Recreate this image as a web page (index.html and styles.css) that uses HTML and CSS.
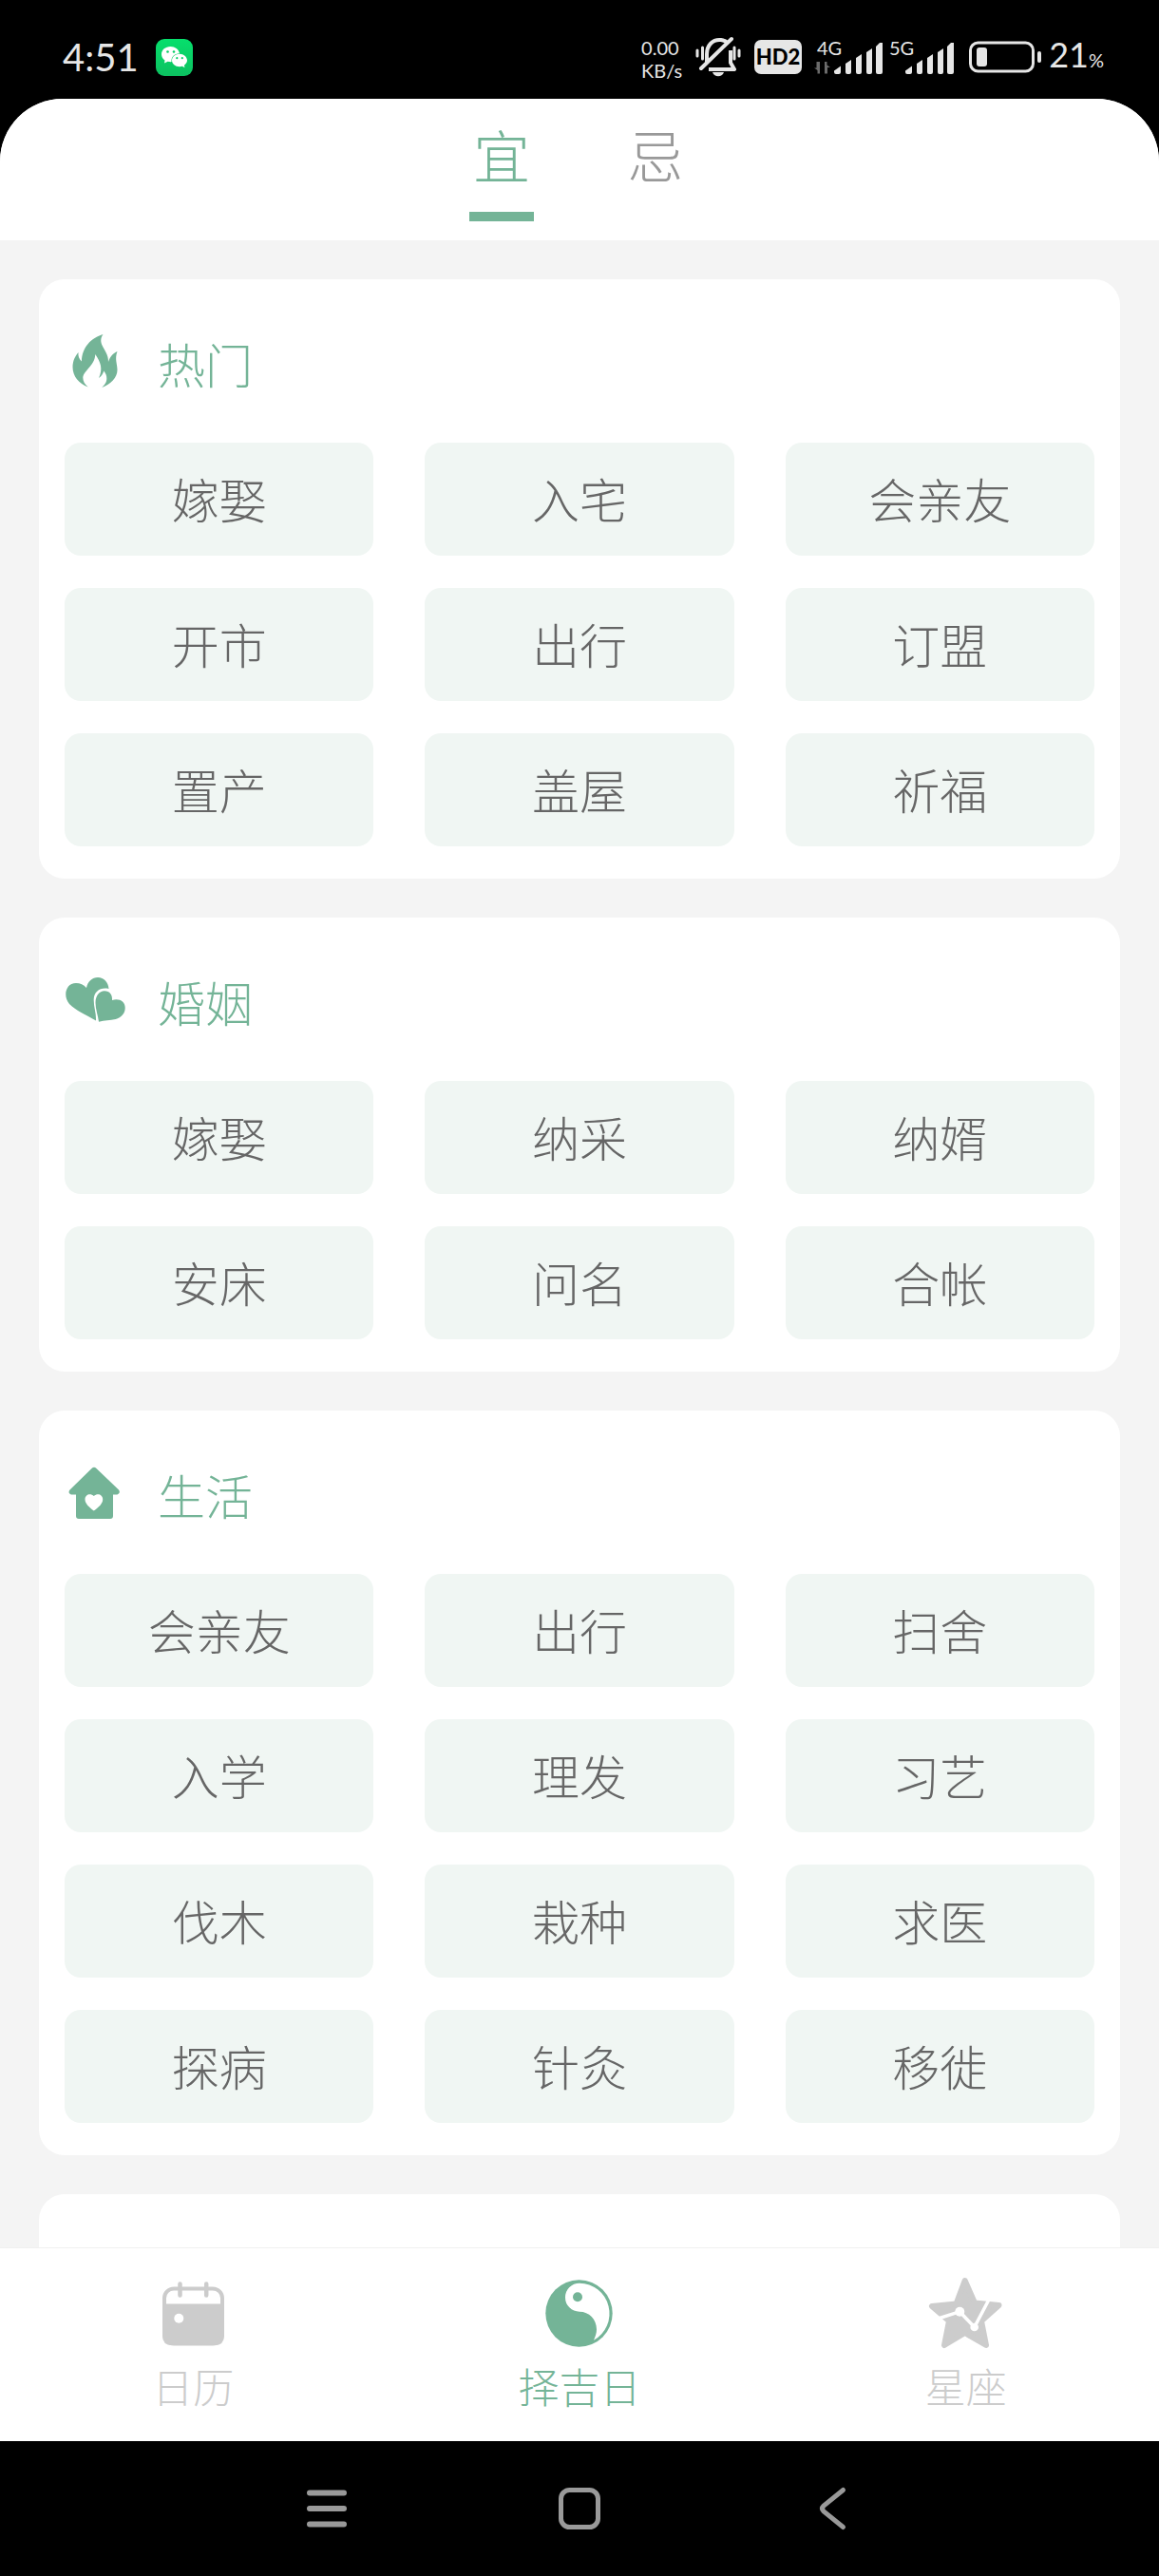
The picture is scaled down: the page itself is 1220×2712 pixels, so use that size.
FILE: index.html
```html
<!DOCTYPE html>
<html lang="zh-CN">
<head>
<meta charset="utf-8">
<meta name="viewport" content="width=device-width, initial-scale=1">
<title>择吉日</title>
<link rel="stylesheet" href="styles.css">
</head>
<body>
<div class="screen">
  <div class="status">
    <span class="clock">4:51</span>
    <svg class="wechat" width="39" height="39" viewBox="0 0 39 39" aria-hidden="true">
      <defs><linearGradient id="wx" x1="0" y1="0" x2="0" y2="1"><stop offset="0" stop-color="#06df6c"/><stop offset="1" stop-color="#0cc160"/></linearGradient></defs>
      <rect width="39" height="39" rx="9" fill="url(#wx)"/>
      <path d="M15.500 8C10 8 6 11.600 6 16.200c0 2.600 1.300 4.800 3.500 6.300L9 25.500l3.600-1.800c1.300.3 2.600.5 4 .4-.8-5 3.200-8.600 8.400-8.800C24.200 11 20.200 8 15.500 8z" fill="#fff"/>
      <path d="M25 15.800c-4.500 0-8 3-8 6.800s3.500 6.700 8 6.700c1 0 2-.2 2.900-.5l2.600 1.500-.6-2.600c2-1.300 3.100-3.100 3.100-5.100 0-3.800-3.600-6.800-8-6.800z" fill="#fff"/>
      <g fill="#08d066"><circle cx="12.500" cy="13.500" r="1.300"/><circle cx="19" cy="13.500" r="1.300"/><circle cx="22.300" cy="20.200" r="1.100"/><circle cx="27.800" cy="20.200" r="1.100"/></g>
    </svg>
    <div class="status-right">
      <span class="speed"><span>0.00</span><span>KB/s</span></span>
      <svg class="bell" width="48" height="44" viewBox="0 0 48 44" fill="none" stroke="#e6e6e6" aria-hidden="true">
        <path d="M12 29V19c0-9 6-16 15-15 3 .3 5 1.500 7 3.500" stroke-width="4"/>
        <path d="M37 15v13l4 7H14" stroke-width="4" stroke-linejoin="round"/>
        <path d="M6 34L38 3" stroke-width="4" stroke-linecap="round"/>
        <path d="M18 38h12c-1 3-3.500 4.300-6 4.300S19 41 18 38z" fill="#e6e6e6" stroke="none"/>
        <path d="M2 15v6M7.500 12v12M41 12v12M46 15v6" stroke-width="3" stroke-linecap="round"/>
      </svg>
      <svg class="hd" width="50" height="36" viewBox="0 0 50 36" aria-hidden="true">
        <rect width="50" height="36" rx="7" fill="#e6e6e6"/>
        <text x="25" y="26" text-anchor="middle" class="hd-text">HD2</text>
      </svg>
      <svg class="sim-one" width="72" height="50" viewBox="0 -6 72 50" fill="#e6e6e6" aria-hidden="true">
        <text x="3" y="17" class="net">4G</text>
        <path d="M6 24v12.500H3.500V33L0 30.500h2.500V24zM11 24h2.500v3.500L17 30h-3v6.500h-3z" fill="#6b6b6b"/>
        <path d="M21 33.500l7-5V35q0 2-2 2h-3q-2 0-2-2zM33 26l6-4v13q0 2-2 2h-2q-2 0-2-2zM44 20l6-4v19q0 2-2 2h-2q-2 0-2-2zM55 14l6-4v25q0 2-2 2h-2q-2 0-2-2zM65 8l4-4h3v31q0 2-2 2h-3q-2 0-2-2z"/>
      </svg>
      <svg class="sim-two" width="68" height="50" viewBox="0 -6 68 50" fill="#e6e6e6" aria-hidden="true">
        <text x="0" y="17" class="net">5G</text>
        <path transform="translate(-4 0)" d="M21 33.500l7-5V35q0 2-2 2h-3q-2 0-2-2zM33 26l6-4v13q0 2-2 2h-2q-2 0-2-2zM44 20l6-4v19q0 2-2 2h-2q-2 0-2-2zM55 14l6-4v25q0 2-2 2h-2q-2 0-2-2zM65 8l4-4h3v31q0 2-2 2h-3q-2 0-2-2z"/>
      </svg>
      <svg class="battery" width="76" height="34" viewBox="0 0 76 34" aria-hidden="true">
        <rect x="1.500" y="2" width="66" height="30" rx="8" fill="none" stroke="#e6e6e6" stroke-width="3"/>
        <rect x="8" y="7" width="11" height="20" rx="3" fill="#e6e6e6"/>
        <rect x="72" y="11" width="4" height="12" rx="2" fill="#e6e6e6"/>
      </svg>
      <span class="percent">21<small>%</small></span>
    </div>
  </div>

  <div class="app">
    <header class="tabs">
      <button class="tab tab-on" type="button">宜</button>
      <button class="tab" type="button">忌</button>
    </header>

    <main class="list">
      <section class="card">
        <h2 class="card-title">
          <svg width="64" height="64" viewBox="0 0 64 64" fill="#74b497" aria-hidden="true"><path d="M40.500 4C37.500 8 38 12 39.500 15.500 42.500 22 46 25 46 33c2-6 5-9 9.500-11-3 8 0 13 0 19.500 0 8-7 15-16.200 18.500 4-4 5-6.500 5-9.500 0-3-1-5.500-3-8-1 3-2.500 5.500-5.300 7.500 2-4 2.800-9 2-13-.8-4-3-8-5.700-12-.3 7-4 11-7 14.500-4 5-6 7-6 10 0 4 2 7 5.500 10C15 56 8.500 48 8.500 38.500 8.500 32 11 27 14.500 23c-.5 4 .8 7 3.500 9.500C18 18 28 7.500 40.500 4z"/></svg>
          <span>热门</span>
        </h2>
        <div class="grid">
          <button type="button">嫁娶</button><button type="button">入宅</button><button type="button">会亲友</button>
          <button type="button">开市</button><button type="button">出行</button><button type="button">订盟</button>
          <button type="button">置产</button><button type="button">盖屋</button><button type="button">祈福</button>
        </div>
      </section>

      <section class="card">
        <h2 class="card-title">
          <svg width="64" height="64" viewBox="0 0 64 64" fill="#74b497" aria-hidden="true"><path d="M33 54.500C22 48 12 44 5 37-2 29 1 15 12 15c4.500 0 8 1.500 11 5 1.500-7 6-11 12-11 6.500 0 11 5 11.500 12-9-2-15.500 3-15.800 11-.2 8 2.800 15 2.300 22.500z"/><path d="M36 55.800c-.8-7-3.500-13-3.500-20 0-7.500 4-12.500 9.500-12.500s8.500 4 8 9.700c7-2.500 13.700 1 13.700 8 0 6-4 10-10 12-6 1.500-11.500 1-17.700 2.800z"/></svg>
          <span>婚姻</span>
        </h2>
        <div class="grid">
          <button type="button">嫁娶</button><button type="button">纳采</button><button type="button">纳婿</button>
          <button type="button">安床</button><button type="button">问名</button><button type="button">合帐</button>
        </div>
      </section>

      <section class="card">
        <h2 class="card-title">
          <svg width="64" height="64" viewBox="0 0 64 64" aria-hidden="true"><path d="M28.500 7q2.500-2.500 5 0L57 29.500c2 2.500 0 5-2.500 5H51V57q0 3-3 3H15q-3 0-3-3V34.500H8c-3 0-4.500-2.500-2.500-5z" fill="#74b497"/><path d="M30.800 51.500C26 48 21.500 44 21.500 39.500c0-5 5.500-7 9.300-3.500 3.800-3.500 9.400-1.500 9.400 3.500 0 4.500-4.500 8.500-9.400 12z" fill="#fff"/></svg>
          <span>生活</span>
        </h2>
        <div class="grid">
          <button type="button">会亲友</button><button type="button">出行</button><button type="button">扫舍</button>
          <button type="button">入学</button><button type="button">理发</button><button type="button">习艺</button>
          <button type="button">伐木</button><button type="button">栽种</button><button type="button">求医</button>
          <button type="button">探病</button><button type="button">针灸</button><button type="button">移徙</button>
        </div>
      </section>

      <section class="card card-next"></section>
    </main>

    <nav class="bottom">
      <a class="item" href="#calendar">
        <svg width="80" height="80" viewBox="0 0 80 80" fill="#ccc" aria-hidden="true"><rect x="10" y="13.500" width="61" height="58" rx="10" fill="none" stroke="#ccc" stroke-width="4"/><path d="M8 29.500h65V63q0 10-10 10H18Q8 73 8 63z"/><path d="M26.500 8.500v12M54.200 8.500v12" stroke="#ccc" stroke-width="4.500" stroke-linecap="round"/><circle cx="25.300" cy="44.700" r="5" fill="#fff"/></svg>
        日历
      </a>
      <a class="item item-on" href="#days">
        <svg width="80" height="80" viewBox="0 0 80 80" aria-hidden="true"><circle cx="39.500" cy="39.500" r="35.200" fill="#74b497"/><path d="M40 7.700a15 15 0 0 0 0 30c10 0 18 8 18 18.500 0 4-1.200 7.500-3 11.500A32 32 0 0 0 40 7.700z" fill="#fff"/><circle cx="38" cy="22.300" r="5" fill="#74b497"/></svg>
        择吉日
      </a>
      <a class="item" href="#zodiac">
        <svg width="80" height="80" viewBox="0 0 80 80" aria-hidden="true"><path d="M38.700 5L49 28.500 74.500 31 56 47.500 61 73 38.700 60 17 73l5-25.500L4 32l25.500-2.500z" fill="#ccc" stroke="#ccc" stroke-width="6" stroke-linejoin="round"/><path d="M9 45.500l24.300-7.800L48.700 54 64.500 24" fill="none" stroke="#fff" stroke-width="3.500"/><circle cx="33.300" cy="37.700" r="5" fill="#fff"/><circle cx="48.700" cy="54" r="4.300" fill="#fff"/></svg>
        星座
      </a>
    </nav>
  </div>

  <div class="system">
    <button type="button" aria-label="菜单"><svg width="48" height="48" viewBox="0 0 48 48" stroke="#999" stroke-width="6" stroke-linecap="round"><path d="M6 7.500h36M6 24h36M6 40.500h36"/></svg></button>
    <button type="button" aria-label="主页"><svg width="48" height="48" viewBox="0 0 48 48" fill="none" stroke="#999" stroke-width="5"><rect x="4.500" y="4.500" width="39" height="39" rx="9"/></svg></button>
    <button type="button" aria-label="返回"><svg width="48" height="48" viewBox="0 0 48 48" fill="none" stroke="#999" stroke-width="5" stroke-linecap="round"><path d="M35.500 4.500L15 21q-3 3 0 6l20.500 16.500"/></svg></button>
  </div>
</div>
</body>
</html>
```

FILE: styles.css
```css
* { box-sizing: border-box; }

body {
  margin: 0;
  background: #000;
  font-family: "Noto Sans CJK SC", sans-serif;
  font-weight: 300;
}

button {
  margin: 0;
  padding: 0;
  border: 0;
  background: none;
  font: inherit;
  color: inherit;
}

svg { display: block; flex: none; }

.screen {
  display: flex;
  flex-direction: column;
  height: 100vh;
}

/* status bar */
.status {
  display: flex;
  align-items: center;
  height: 104px;
  padding: 16px 58px 0 66px;
  color: #e6e6e6;
  font-family: Lato, sans-serif;
  font-weight: 400;
}

.clock { font-size: 40px; line-height: 40px; }
.wechat { margin-left: 18px; }

.status-right {
  display: flex;
  align-items: center;
  margin-left: auto;
}

.speed {
  display: flex;
  flex-direction: column;
  padding-top: 4px;
  font-size: 20px;
  line-height: 24px;
}

.bell { margin-left: 14px; }
.hd { margin-left: 14px; }
.sim-one { margin-left: 13px; }
.sim-two { margin-left: 7px; }
.battery { margin-left: 16px; }
.percent { margin-left: 8px; font-size: 36px; line-height: 40px; }
.percent small { font-size: 20px; }
.net { font-size: 20px; }
.hd-text { font-size: 22px; font-weight: 900; fill: #000; }

/* app window */
.app {
  flex: 1;
  min-height: 0;
  display: flex;
  flex-direction: column;
  overflow: hidden;
  border-radius: 66px 66px 0 0;
  background: #f4f4f4;
}

.tabs {
  display: flex;
  justify-content: center;
  gap: 94px;
  height: 149px;
  padding: 0 2px 20px 0;
  background: #fff;
}

.tab {
  width: 68px;
  border-bottom: 10px solid transparent;
  padding-bottom: 4px;
  font-size: 60px;
  line-height: 80px;
  color: #999;
}

.tab-on { color: #74b497; border-color: #74b497; }

.list {
  flex: 1;
  min-height: 0;
  display: flex;
  flex-direction: column;
  gap: 41px;
  padding: 41px 41px 0;
  overflow-y: auto;
  scrollbar-width: none;
}

.card {
  flex: none;
  padding: 0 27px 34px;
  border-radius: 27px;
  background: #fff;
}

.card-next { min-height: 172px; }

.card-title {
  display: flex;
  align-items: center;
  gap: 34px;
  height: 172px;
  margin: 0;
  font-size: 50px;
  font-weight: 300;
  color: #74b497;
}

.card-title span { padding-top: 4px; }

.grid {
  display: grid;
  grid-template-columns: repeat(3, 1fr);
  grid-auto-rows: 119px;
  gap: 34px 54px;
}

.grid button {
  padding-bottom: 4px;
  border-radius: 17px;
  background: #f0f6f3;
  font-size: 50px;
  color: #666;
}

/* app navigation */
.bottom {
  display: grid;
  grid-template-columns: repeat(3, 1fr);
  height: 204px;
  border-top: 1px solid #f0f0f0;
  background: #fff;
}

.item {
  display: flex;
  flex-direction: column;
  align-items: center;
  gap: 5px;
  padding-top: 29px;
  font-size: 43px;
  line-height: 60px;
  color: #ccc;
  text-decoration: none;
}

.item-on { color: #74b497; }

/* system keys */
.system {
  display: flex;
  justify-content: center;
  height: 142px;
}

.system button {
  display: flex;
  align-items: center;
  justify-content: center;
  width: 266px;
}
```
